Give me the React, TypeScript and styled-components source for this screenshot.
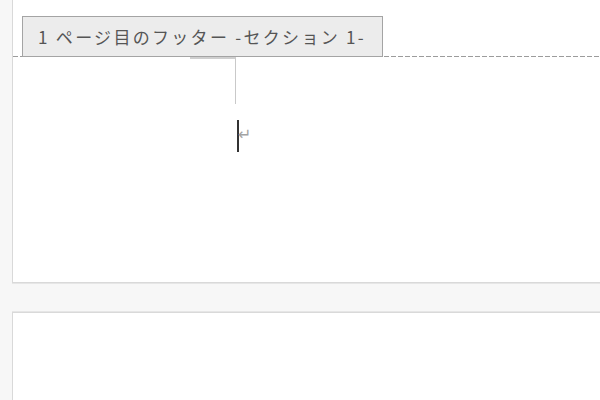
import React from 'react';
import styled, { createGlobalStyle } from 'styled-components';

const GlobalStyle = createGlobalStyle`
  html, body {
    margin: 0;
    padding: 0;
    width: 600px;
    height: 400px;
    overflow: hidden;
    background: #f7f7f7;
    font-family: "Noto Sans CJK JP", "Noto Sans", sans-serif;
  }
`;

const Canvas = styled.div`
  display: flex;
  flex-direction: column;
  gap: 29px;
  padding-left: 12px;
  width: 600px;
  height: 400px;
  box-sizing: border-box;
  overflow: hidden;
`;

const Page = styled.div<{ $height: number; $top?: boolean }>`
  position: relative;
  flex: 0 0 auto;
  height: ${p => p.$height}px;
  box-sizing: border-box;
  background: #ffffff;
  border-left: 1px solid #d9d9d9;
  border-bottom: ${p => (p.$top ? '1px solid #d9d9d9' : 'none')};
  border-top: ${p => (p.$top ? 'none' : '1px solid #d9d9d9')};
  box-shadow: ${p => (p.$top ? '0 1px 0 #e6e6e6' : '0 -1px 0 #e6e6e6')};
`;

const FooterArea = styled.div`
  display: flex;
  flex-direction: column;
  padding-top: 56px;
`;

const Boundary = styled.div`
  height: 1px;
  background-image: linear-gradient(to right, #9c9c9c 0 5px, transparent 5px 7px);
  background-size: 7px 1px;
  background-repeat: repeat-x;
`;

const FooterTab = styled.div`
  position: absolute;
  left: 9px;
  top: 16px;
  width: 361px;
  height: 41px;
  box-sizing: border-box;
  display: flex;
  align-items: center;
  padding-left: 15px;
  background: #ececec;
  border: 1px solid #a4a4a4;
  color: #555555;
  font-size: 17px;
  letter-spacing: 2.3px;
  white-space: nowrap;
`;

const FooterBody = styled.div`
  display: flex;
  flex-direction: column;
  padding-left: 177px;
`;

const CornerMark = styled.div`
  width: 46px;
  height: 47px;
  border-top: 2px solid #cfcfcf;
  border-right: 1px solid #c9c9c9;
  box-sizing: border-box;
`;

const Line = styled.div`
  display: flex;
  align-items: flex-start;
  margin-top: 16px;
  padding-left: 47px;
  height: 32px;
`;

const Caret = styled.span`
  display: block;
  width: 2px;
  height: 32px;
  background: #333333;
`;

const ParaMark = styled.span`
  display: block;
  margin-left: -1px;
  margin-top: 6px;
  font-family: "DejaVu Sans", sans-serif;
  font-size: 16px;
  line-height: 18px;
  color: #a3a3a3;
`;

export default function App() {
  return (
    <>
      <GlobalStyle />
      <Canvas>
        <Page $height={283} $top>
          <FooterArea>
            <Boundary />
            <FooterBody>
              <CornerMark />
              <Line>
                <Caret />
                <ParaMark>↵</ParaMark>
              </Line>
            </FooterBody>
          </FooterArea>
          <FooterTab>1 ページ目のフッター -セクション 1-</FooterTab>
        </Page>
        <Page $height={100} />
      </Canvas>
    </>
  );
}
